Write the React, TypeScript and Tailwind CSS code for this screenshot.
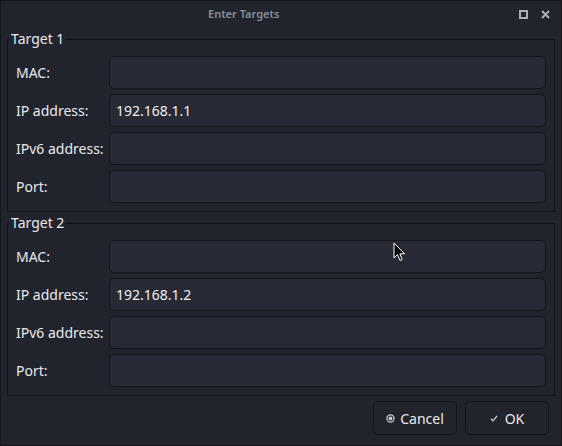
import React from 'react';

const fields = ['MAC:', 'IP address:', 'IPv6 address:', 'Port:'];

function Group({ title, ip }: { title: string; ip: string }) {
  return (
    <fieldset className="border border-[#121318] px-[8px] pt-[8px] pb-[8px] m-0 min-w-0">
      <legend className="-ml-[6px] px-[1px] text-[14px] leading-[18px] text-[#e8eaee]">{title}</legend>
      <div className="flex flex-col gap-[5px]">
        {fields.map((f) => (
          <div key={f} className="flex items-center">
            <div className="w-[93px] text-[14px] text-[#e8eaee] whitespace-nowrap">{f}</div>
            <div className="flex-1 h-[33px] rounded-[5px] border border-[#15161c] bg-[#272934] flex items-center px-[6px] text-[14px] text-[#f0f1f4]">
              {f === 'IP address:' ? ip : ''}
            </div>
          </div>
        ))}
      </div>
    </fieldset>
  );
}

export default function App() {
  return (
    <div
      className="relative w-[562px] h-[446px] bg-[#22242d] border border-[#16171c] flex flex-col overflow-hidden"
      style={{ fontFamily: '"Noto Sans", "DejaVu Sans", sans-serif' }}
    >
      <div className="relative h-[29px] flex items-start pt-[5px] pl-[207px] shrink-0">
        <span className="text-[11px] font-semibold text-[#8b8f97]">Enter Targets</span>
        <div className="absolute right-[11px] top-[9px] flex items-center gap-[13px]">
          <svg width="9" height="9" viewBox="0 0 9 9">
            <rect x="1" y="1" width="7" height="7" fill="none" stroke="#a9adb4" strokeWidth="2" />
          </svg>
          <svg width="9" height="9" viewBox="0 0 9 9">
            <path d="M1 1L8 8M8 1L1 8" stroke="#a9adb4" strokeWidth="2" />
          </svg>
        </div>
      </div>
      <div className="flex flex-col gap-[2px] px-[6px]">
        <Group title="Target 1" ip="192.168.1.1" />
        <Group title="Target 2" ip="192.168.1.2" />
      </div>
      <div className="flex justify-end gap-[8px] pr-[12px] pt-[5px]">
        <button className="w-[84px] h-[34px] rounded-[5px] border border-[#15161c] bg-[#22242d] flex items-center justify-center gap-[5px] text-[14px] text-[#e8eaee]">
          <svg width="9" height="9" viewBox="0 0 10 10">
            <circle cx="5" cy="5" r="4" fill="none" stroke="#c8cbd0" strokeWidth="1.4" />
            <circle cx="5" cy="5" r="2.2" fill="#c8cbd0" />
          </svg>
          Cancel
        </button>
        <button className="w-[84px] h-[34px] rounded-[5px] border border-[#15161c] bg-[#22242d] flex items-center justify-center gap-[7px] text-[14px] text-[#e8eaee]">
          <svg width="8" height="7" viewBox="0 0 8 7">
            <path d="M1 3.8L3 5.8L7 1" fill="none" stroke="#c8cbd0" strokeWidth="1.3" />
          </svg>
          OK
        </button>
      </div>
      <svg className="absolute left-[392px] top-[241px]" width="13" height="20" viewBox="0 0 13 20">
        <path d="M1 1L1 16L4.5 12.5L7 18.5L9.2 17.5L6.8 11.8L11.5 11.8Z" fill="#000" stroke="#fff" strokeWidth="1" />
      </svg>
    </div>
  );
}
